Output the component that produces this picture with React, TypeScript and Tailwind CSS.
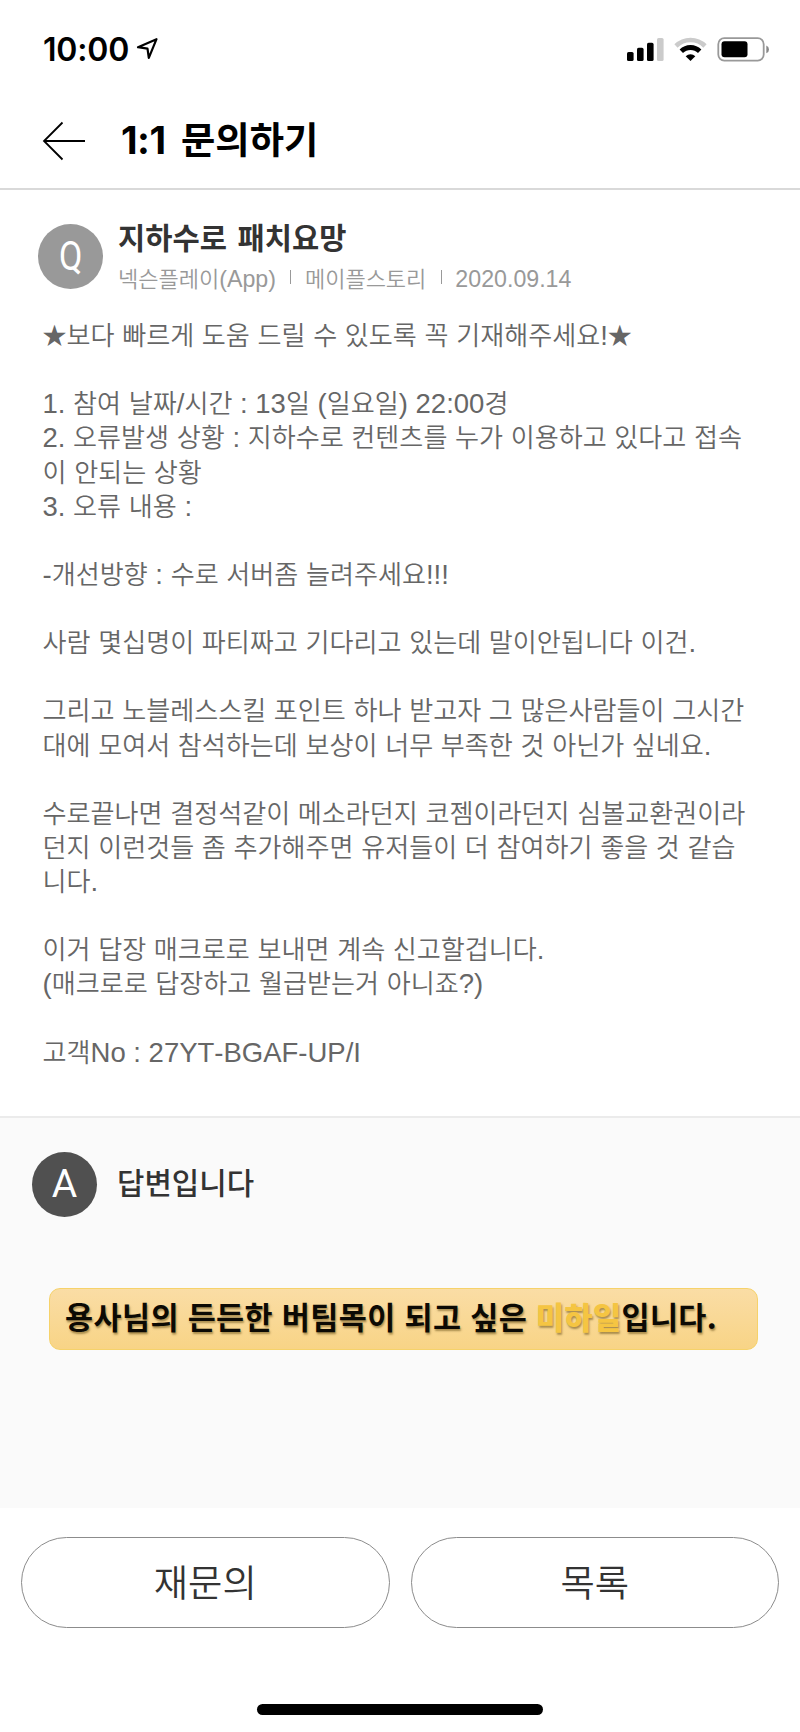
import React from 'react';

interface MixedProps {
  text: string;
  ko: string;
}

// Hangul runs and latin runs use different fonts and sizes
const Mixed: React.FC<MixedProps> = ({ text, ko }) => (
  <>
    {text.split(/([가-힣]+|★)/).map((part, i) => {
      if (part === '') return null;
      if (part === '★') {
        return <span key={i} className="relative -top-[1.500px] font-['Noto_Sans_CJK_KR',sans-serif] text-[24px] leading-none">★</span>;
      }
      return i % 2 === 1 ? (
        <span key={i} className={ko}>{part}</span>
      ) : (
        <span key={i}>{part}</span>
      );
    })}
  </>
);

const questionLines = [
  '★보다 빠르게 도움 드릴 수 있도록 꼭 기재해주세요!★',
  '',
  '1. 참여 날짜/시간 : 13일 (일요일) 22:00경',
  '2. 오류발생 상황 : 지하수로 컨텐츠를 누가 이용하고 있다고 접속',
  '이 안되는 상황',
  '3. 오류 내용 :',
  '',
  '-개선방향 : 수로 서버좀 늘려주세요!!!',
  '',
  '사람 몇십명이 파티짜고 기다리고 있는데 말이안됩니다 이건.',
  '',
  '그리고 노블레스스킬 포인트 하나 받고자 그 많은사람들이 그시간',
  '대에 모여서 참석하는데 보상이 너무 부족한 것 아닌가 싶네요.',
  '',
  '수로끝나면 결정석같이 메소라던지 코젬이라던지 심볼교환권이라',
  '던지 이런것들 좀 추가해주면 유저들이 더 참여하기 좋을 것 같습',
  '니다.',
  '',
  '이거 답장 매크로로 보내면 계속 신고할겁니다.',
  '(매크로로 답장하고 월급받는거 아니죠?)',
  '',
  '고객No : 27YT-BGAF-UP/I',
];

const StatusBar = () => (
  <div className="flex h-[98px] items-center pl-[43px] pr-[30px]">
    <span className="pt-[2px] font-['Inter',sans-serif] text-[32px] font-semibold leading-none tracking-[-0.2px] text-black">10:00</span>
    <svg className="ml-[7px]" width="24" height="24" viewBox="0 0 24 24" fill="none" stroke="#000" strokeWidth="2.2" strokeLinejoin="round">
      <path d="M20.500 2.200 2 10.200 11.500 11.700 12.800 20.800Z" />
    </svg>
    <svg className="ml-auto" width="144" height="28" viewBox="0 0 144 28">
      <rect x="1" y="17" width="6.600" height="9" rx="1.600" />
      <rect x="11" y="12.800" width="6.600" height="13.200" rx="1.600" />
      <rect x="21" y="7.800" width="6.600" height="18.200" rx="1.600" />
      <rect x="31" y="3" width="6.600" height="23" rx="1.600" fill="#cbcbcb" />
      <path d="M50 11A20.500 20.500 0 0 1 79 11" fill="none" stroke="#cbcbcb" strokeWidth="4.600" />
      <path d="M55.300 16.300A13 13 0 0 1 73.700 16.300" fill="none" stroke="#000" strokeWidth="4.800" />
      <path d="M64.500 26 59.700 21.200A7 7 0 0 1 69.300 21.200Z" />
      <rect x="92.300" y="3.200" width="45.400" height="22.400" rx="6" fill="none" stroke="#999" strokeWidth="1.800" />
      <rect x="95.500" y="6.300" width="26" height="16" rx="3" />
      <path d="M140.300 10.500Q143 11.500 143 14.400T140.300 18.300Z" fill="#888" />
    </svg>
  </div>
);

const Header = () => (
  <header className="flex h-[92px] items-center border-b-2 border-[#d9d9d9] pb-[5px] pl-[42px]">
    <svg width="44" height="40" viewBox="0 0 44 40" fill="none" stroke="#000" strokeWidth="1.800">
      <path d="M20.500 1.500 2 20 20.500 38.500M2 20H43" />
    </svg>
    <h1 className="-mt-px ml-[35px] flex items-baseline font-['Noto_Sans_CJK_KR',sans-serif] text-[37.300px] font-bold leading-none text-black">
      <span className="w-[60px] font-['Inter',sans-serif] text-[38.500px] tracking-[-0.500px]">1:1</span>
      <span>문의하기</span>
    </h1>
  </header>
);

const Question = () => (
  <section className="h-[926px] pt-[30px]">
    <div className="flex pl-[38px]">
      <div className="mt-[4px] flex size-[65px] items-center justify-center rounded-full bg-[#999]">
        <span className="scale-x-[0.850] font-['Roboto',sans-serif] text-[40px] leading-none text-white">Q</span>
      </div>
      <div className="ml-[15px]">
        <h2 className="h-[44px] font-['Noto_Sans_CJK_KR',sans-serif] text-[29.600px] font-bold leading-[34px] text-[#333] [word-spacing:4px]">지하수로 패치요망</h2>
        <div className="flex h-[30px] items-center font-['Liberation_Sans',sans-serif] text-[23.200px] leading-[30px] text-[#999]">
          <span><Mixed text="넥슨플레이(App)" ko="font-['Noto_Sans_CJK_KR',sans-serif] text-[22px] font-[350] leading-none" /></span>
          <i className="mb-[4px] ml-[14px] mr-[14px] h-[14px] w-px bg-[#999]" />
          <span><Mixed text="메이플스토리" ko="font-['Noto_Sans_CJK_KR',sans-serif] text-[22px] font-[350] leading-none" /></span>
          <i className="mb-[4px] ml-[15px] mr-[13px] h-[14px] w-px bg-[#999]" />
          <span>2020.09.14</span>
        </div>
      </div>
    </div>
    <div className="mt-[25px] pl-[42.500px] font-['Liberation_Sans','Noto_Sans_CJK_KR',sans-serif] text-[27.500px] leading-[34.140px] text-[#666] [font-kerning:none]">
      {questionLines.map((line, i) => (
        <p key={i} className="h-[34.140px] whitespace-pre">
          <Mixed text={line} ko="font-['Noto_Sans_CJK_KR',sans-serif] text-[26.100px] font-[350] leading-none" />
        </p>
      ))}
    </div>
  </section>
);

const Answer = () => (
  <section className="h-[392px] border-t-2 border-[#ebebeb] bg-[#fafafa] pt-[34px]">
    <div className="flex items-center pl-[32px]">
      <div className="flex size-[65px] items-center justify-center rounded-full bg-[#505050]">
        <span className="font-['Roboto',sans-serif] text-[39px] leading-none text-white">A</span>
      </div>
      <h2 className="-mt-[6px] ml-[20px] font-['Noto_Sans_CJK_KR',sans-serif] text-[29.800px] font-medium leading-none text-[#333]">답변입니다</h2>
    </div>
    <div className="ml-[49px] mt-[71px] flex h-[62px] w-[709px] items-center rounded-[11px] border border-[#f6d26a] bg-linear-to-b from-[#fadda5] to-[#f8d486] pb-[6px] pl-[15px]">
      <p className="whitespace-pre font-['Noto_Sans_CJK_KR',sans-serif] text-[30.500px] font-bold leading-none tracking-[0.400px] text-[#0c0a04] [text-shadow:1px_2px_2px_rgba(90,65,10,0.5)] [word-spacing:1.500px]">
        용사님의 든든한 버팀목이 되고 싶은 <span className="font-black text-[#f5c542]">미하일</span>입니다.
      </p>
    </div>
  </section>
);

const buttons = ['재문의', '목록'];

const App: React.FC = () => (
  <div className="flex h-[1732px] w-[800px] flex-col overflow-hidden bg-white">
    <StatusBar />
    <Header />
    <Question />
    <Answer />
    <div className="flex gap-[21px] px-[21px] pt-[29px]">
      {buttons.map((label) => (
        <button
          key={label}
          className="h-[91px] flex-1 rounded-full border border-[#8c8c8c] pb-[2px] font-['Noto_Sans_CJK_KR',sans-serif] text-[37.300px] font-[350] leading-none text-[#333]"
        >
          {label}
        </button>
      ))}
    </div>
    <div className="mx-auto mt-[76px] h-[11px] w-[286px] rounded-full bg-black" />
  </div>
);

export default App;
